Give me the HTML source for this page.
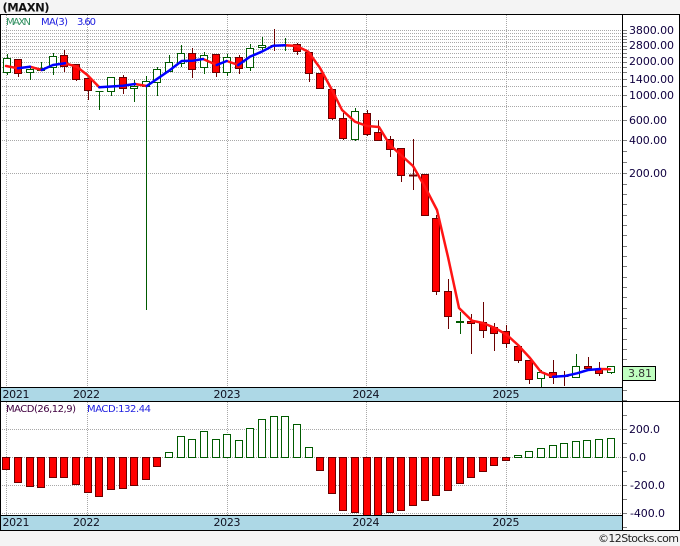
<!DOCTYPE html>
<html><head><meta charset="utf-8"><title>MAXN</title>
<style>
html,body{margin:0;padding:0;background:#f4f4f4}
svg{display:block}
text{font-family:"DejaVu Sans","Liberation Sans",sans-serif}
</style></head><body>
<svg xmlns="http://www.w3.org/2000/svg" width="680" height="546" viewBox="0 0 680 546">
<rect width="680" height="546" fill="#f4f4f4"/>
<rect x="0" y="14" width="680" height="516" fill="#fff"/>
<text x="2.5" y="11.5" font-size="11.5" font-weight="bold" fill="#111" textLength="47">(MAXN)</text>

<g shape-rendering="crispEdges" fill="none">
<path stroke="#a8a8a8" stroke-dasharray="1 1" d="M2 30.5H622M2 33.5H622M2 36.5H622M2 39.5H622M2 42.5H622M2 46.5H622M2 49.5H622M2 53.5H622M2 57.5H622M2 62.5H622M2 67.5H622M2 72.5H622M2 79.5H622M2 86.5H622M2 95.5H622M2 106.5H622M2 120.5H622M2 140.5H622M2 173.5H622M2 429.5H622M2 457.5H622M2 485.5H622M2 513.5H622"/>
<path stroke="#a8a8a8" stroke-dasharray="1 1" d="M6.5 15V387M87.5 15V387M227.5 15V387M366.5 15V387M506.5 15V387M6.5 402V515M87.5 402V515M227.5 402V515M366.5 402V515M506.5 402V515"/>
<!-- axis ticks -->
<path stroke="#808080" d="M623 30.5h4M623 33.5h4M623 36.5h4M623 39.5h4M623 42.5h4M623 46.5h4M623 49.5h4M623 53.5h4M623 57.5h4M623 62.5h4M623 67.5h4M623 72.5h4M623 79.5h4M623 86.5h4M623 95.5h4M623 106.5h4M623 120.5h4M623 140.5h4M623 151.5h4M623 162.5h4M623 173.5h4M623 184.5h4M623 194.5h4M623 204.5h4M623 215.5h4M623 225.5h4M623 235.5h4M623 246.5h4M623 256.5h4M623 266.5h4M623 277.5h4M623 287.5h4M623 297.5h4M623 308.5h4M623 318.5h4M623 328.5h4M623 339.5h4M623 349.5h4M623 359.5h4M623 369.5h4M623 390.5h4M623 400.5h4M623 415.5h4M623 429.5h4M623 443.5h4M623 457.5h4M623 471.5h4M623 485.5h4M623 499.5h4M623 513.5h4M623 527.5h4"/>

<!-- wicks green -->
<path stroke="#005a00" d="M7.5 54V75M30.5 66V80M41.5 62V71M53.5 53V75M99.5 91V110M111.5 77V96M134.5 80V102M146.5 76V310M157.5 67V96M169.5 55V71M181.5 45V67M204.5 52V74M227.5 54V76M250.5 44V71M262.5 37V50M285.5 38V51M355.5 108V141M460.5 312V334M541.5 370V387M576.5 354V377M611.5 366V374"/>
<!-- wicks red -->
<path stroke="#6a0000" d="M18.5 59V77M64.5 50V72M76.5 64V81M88.5 78V100M123.5 75V94M192.5 48V78M216.5 54V77M239.5 55V74M274.5 29V51M297.5 43V55M309.5 52V82M320.5 73V89M332.5 89V120M343.5 113V140M367.5 110V136M378.5 120V141M390.5 136V157M401.5 148V182M413.5 139V190M425.5 174V216M436.5 215V295M448.5 279V329M471.5 314V354M483.5 302V338M494.5 323V351M506.5 325V348M518.5 346V363M529.5 360V384M553.5 360V384M564.5 371V386M588.5 357V369M599.5 362V376"/>
<!-- green bodies -->
<path fill="#fff" stroke="#005a00" d="M3.5 58.5h7v14h-7zM26.5 69.5h7v3h-7zM37.5 68.5h7v2h-7zM49.5 56.5h7v11h-7zM107.5 77.5h7v14h-7zM130.5 86.5h7v2h-7zM142.5 81.5h7v5h-7zM153.5 69.5h7v13h-7zM165.5 62.5h7v9h-7zM177.5 53.5h7v10h-7zM200.5 55.5h7v12h-7zM223.5 57.5h7v15h-7zM246.5 48.5h7v19h-7zM258.5 45.5h7v2h-7zM351.5 111.5h7v28h-7zM537.5 372.5h7v6h-7zM572.5 366.5h7v11h-7zM607.5 366.5h7v6h-7z"/>
<path stroke="#005a00" d="M95.5 91.5h8M281.5 45.5h8"/>
<path stroke="#005a00" stroke-width="2" d="M456 322h8"/>
<!-- red bodies -->
<path fill="#ff0000" stroke="#6a0000" d="M14.5 59.5h7v14h-7zM60.5 55.5h7v11h-7zM72.5 64.5h7v15h-7zM84.5 78.5h7v12h-7zM119.5 77.5h7v11h-7zM188.5 53.5h7v16h-7zM212.5 54.5h7v18h-7zM235.5 57.5h7v11h-7zM293.5 44.5h7v7h-7zM305.5 52.5h7v21h-7zM316.5 73.5h7v15h-7zM328.5 89.5h7v29h-7zM339.5 118.5h7v20h-7zM363.5 113.5h7v21h-7zM374.5 132.5h7v8h-7zM386.5 139.5h7v10h-7zM397.5 148.5h7v27h-7zM421.5 174.5h7v41h-7zM432.5 218.5h7v73h-7zM444.5 291.5h7v25h-7zM467.5 321.5h7v2h-7zM479.5 322.5h7v8h-7zM490.5 327.5h7v6h-7zM502.5 331.5h7v12h-7zM514.5 346.5h7v14h-7zM525.5 360.5h7v19h-7zM549.5 372.5h7v5h-7zM584.5 366.5h7v2h-7zM595.5 369.5h7v4h-7z"/>
<path stroke="#6a0000" d="M270.5 45.5h8M560.5 376.5h8"/>
<path stroke="#6a0000" stroke-width="2" d="M409 175.5h8"/>

<!-- MACD green bars -->
<path fill="#fff" stroke="#005a00" d="M165.5 452.5h7v5h-7zM177.5 436.5h7v21h-7zM188.5 439.5h7v18h-7zM200.5 431.5h7v26h-7zM212.5 439.5h7v18h-7zM223.5 434.5h7v23h-7zM235.5 440.5h7v17h-7zM246.5 428.5h7v29h-7zM258.5 419.5h7v38h-7zM270.5 416.5h7v41h-7zM281.5 416.5h7v41h-7zM293.5 424.5h7v33h-7zM305.5 447.5h7v10h-7zM514.5 455.5h7v2h-7zM525.5 451.5h7v6h-7zM537.5 448.5h7v9h-7zM549.5 445.5h7v12h-7zM560.5 443.5h7v14h-7zM572.5 441.5h7v16h-7zM583.5 440.5h7v17h-7zM595.5 439.5h7v18h-7zM607.5 438.5h7v19h-7z"/>
<!-- MACD red bars -->
<path fill="#ff0000" stroke="#6a0000" d="M2.5 457.5h7v12h-7zM14.5 457.5h7v25h-7zM26.5 457.5h7v29h-7zM37.5 457.5h7v30h-7zM49.5 457.5h7v20h-7zM60.5 457.5h7v20h-7zM72.5 457.5h7v27h-7zM84.5 457.5h7v35h-7zM95.5 457.5h7v39h-7zM107.5 457.5h7v32h-7zM119.5 457.5h7v31h-7zM130.5 457.5h7v28h-7zM142.5 457.5h7v22h-7zM153.5 457.5h7v9h-7zM316.5 457.5h7v13h-7zM328.5 457.5h7v36h-7zM339.5 457.5h7v53h-7zM351.5 457.5h7v55h-7zM363.5 457.5h7v60h-7zM374.5 457.5h7v60h-7zM386.5 457.5h7v55h-7zM397.5 457.5h7v53h-7zM409.5 457.5h7v48h-7zM421.5 457.5h7v43h-7zM432.5 457.5h7v38h-7zM444.5 457.5h7v33h-7zM456.5 457.5h7v26h-7zM467.5 457.5h7v20h-7zM479.5 457.5h7v14h-7zM490.5 457.5h7v8h-7zM502.5 457.5h7v3h-7z"/>
</g>

<!-- MA line -->
<g fill="none" stroke-width="2.5" stroke-linejoin="round" stroke-linecap="round">
<path stroke="#ff1414" d="M6 66L18 68.3M30 66.7L41.7 70M65 63.3L76.7 66.7L87.3 75L99.3 87.3M135 84L146.7 86M203 59L216.7 65M226.7 61L238.3 65M285 45.3L296.7 46L308.3 51.7L320 68L332 90L342 110L355 121.7L367 126L379 127L390 145L402 156L413 166L425 187L437 210L448 257L459 308L472 320.7L483 323L495 328L507 335L518 345L530 358L541 372L553 376.7M600 369L610 369.3"/>
<path stroke="#0000ff" d="M18 68.3L30 66.7M41.7 70L53 65L65 63.3M99.3 87.3L123 85.7L135 84M146.7 86L158 78.3L170 70L181.7 61L193 60.7L203 59M216.7 65L226.7 61M238.3 65L250 56.7L261.7 51.7L273.3 45.7L285 45.3M553 376.7L565 376L577 373.3L588 370L600 369"/>
</g>

<g shape-rendering="crispEdges">
<!-- strips -->
<rect x="1" y="387" width="621" height="14" fill="#add8e6"/>
<rect x="1" y="515" width="621" height="15" fill="#add8e6"/>
<path fill="none" stroke="#000" d="M0 14.5H680M0 401.5H680M0 530.5H680M1 387.5H622M1 515.5H622M0.5 14V530M622.5 14V530M679.5 14V530M622 366.5H655.5V380.5H622"/>
<rect x="623" y="367" width="32" height="13" fill="#c0ffc0"/>
</g>

<g font-size="10">
<text x="6" y="25" fill="#2f8f5f" textLength="25">MAXN</text>
<text x="41" y="25" fill="#2020e0" textLength="27">MA(3)</text>
<text x="77" y="25" fill="#2020e0" textLength="19">3.60</text>
<text x="6" y="412" fill="#400040" textLength="70">MACD(26,12,9)</text>
<text x="87" y="412" fill="#2020e0" textLength="64">MACD:132.44</text>
</g>

<g font-size="11" fill="#100040">
<text x="629" y="34" textLength="45">3800.00</text>
<text x="629" y="49" textLength="45">2800.00</text>
<text x="629" y="65" textLength="45">2000.00</text>
<text x="629" y="83" textLength="45">1400.00</text>
<text x="629" y="99" textLength="45">1000.00</text>
<text x="629" y="124" textLength="38">600.00</text>
<text x="629" y="144" textLength="38">400.00</text>
<text x="629" y="177" textLength="38">200.00</text>
<text x="629" y="433" textLength="31">200.0</text>
<text x="629" y="461" textLength="17">0.0</text>
<text x="630" y="489" textLength="35">-200.0</text>
<text x="630" y="517" textLength="35">-400.0</text>
</g>
<text x="628" y="377" font-size="11" fill="#333" textLength="24">3.81</text>

<g font-size="11" fill="#101020">
<text x="2.5" y="398" textLength="27">2021</text>
<text x="73" y="398" textLength="27">2022</text>
<text x="213.5" y="398" textLength="27">2023</text>
<text x="352.5" y="398" textLength="27">2024</text>
<text x="492.5" y="398" textLength="27">2025</text>
<text x="2.5" y="526" textLength="27">2021</text>
<text x="73" y="526" textLength="27">2022</text>
<text x="213.5" y="526" textLength="27">2023</text>
<text x="352.5" y="526" textLength="27">2024</text>
<text x="492.5" y="526" textLength="27">2025</text>
</g>
<text x="598" y="542" font-size="11" fill="#222" textLength="81">©12Stocks.com</text>
</svg>
</body></html>
